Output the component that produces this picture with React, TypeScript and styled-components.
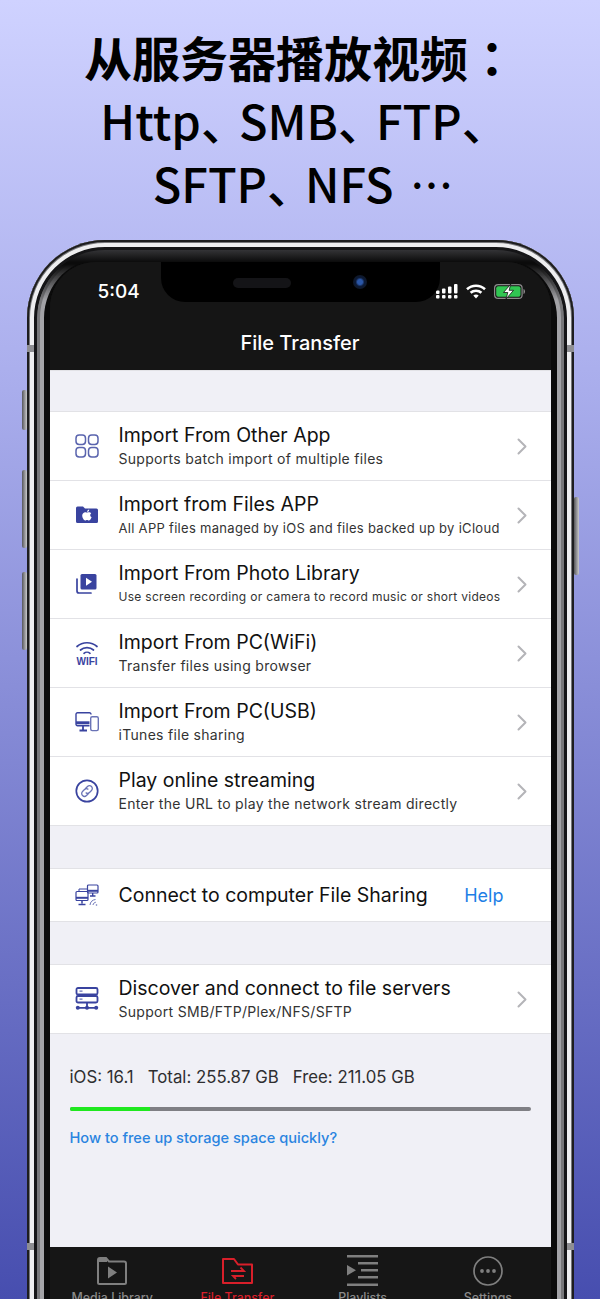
import React from 'react';
import styled, { createGlobalStyle } from 'styled-components';

const INDIGO = '#39439f';
const GREY = '#7f7f7f';
const RED = '#d81f2a';

const GlobalStyle = createGlobalStyle`
  html, body {
    margin: 0;
    padding: 0;
    height: 1299px;
    overflow: hidden;
  }
  * { box-sizing: border-box; }
`;

const Page = styled.div`
  width: 600px;
  height: 1299px;
  overflow: hidden;
  display: flex;
  flex-direction: column;
  align-items: center;
  background: linear-gradient(180deg, #cfd2ff 0%, #a9adec 30%, #474eaf 100%);
  font-family: Inter, "Liberation Sans", sans-serif;
`;

const Headline = styled.h1`
  flex: none;
  margin: 0;
  padding-top: 25px;
  height: 240px;
  width: 100%;
  text-align: center;
  font-family: "Noto Sans CJK JP", "Noto Sans CJK SC", sans-serif;
  font-weight: 500;
  font-size: 47px;
  line-height: 63px;
  color: #000;
`;

const HeadlineStrong = styled.span`
  display: block;
  font-size: 48px;
  font-weight: 700;
`;

const HeadlineLine = styled.span`
  display: block;
`;

const Pause = styled.span`
  letter-spacing: -9px;
`;

const Dots = styled.span`
  letter-spacing: -12px;
  font-weight: 400;
`;

const Phone = styled.div`
  position: relative;
  flex: none;
  width: 547px;
  height: 1180px;
  padding: 22px 23px 0;
  border-radius: 78px;
  background: linear-gradient(180deg, #3a3a3d 8px, #0b0b0b 22px);
  box-shadow:
    inset 0 0 0 2px #1d1d1f,
    inset 0 0 0 3px #77777a,
    inset 0 0 0 7px #eeeef0,
    inset 0 0 0 10px #151517;

  /* the grey inner rim fades out toward the top corners */
  &::before {
    content: '';
    position: absolute;
    inset: 10px;
    border-radius: 68px;
    box-shadow:
      inset 0 0 0 3px #77777a,
      inset 0 0 0 7px #a2a2a6,
      inset 0 0 0 13px #0b0b0b;
    -webkit-mask-image: linear-gradient(180deg, transparent 14px, #000 50px);
    mask-image: linear-gradient(180deg, transparent 14px, #000 50px);
  }
`;

const SideButton = styled.span<{ $side: 'left' | 'right'; $top: number; $height: number }>`
  position: absolute;
  ${(p) => (p.$side === 'left' ? 'left: -5px;' : 'right: -5px;')}
  top: ${(p) => p.$top}px;
  width: 5px;
  height: ${(p) => p.$height}px;
  border-radius: 2px;
  background: linear-gradient(90deg, #56565a, #c9c9cc);
`;

const Band = styled.span<{ $side: 'left' | 'right'; $top: number }>`
  position: absolute;
  ${(p) => (p.$side === 'left' ? 'left: 0;' : 'right: 0;')}
  top: ${(p) => p.$top}px;
  width: 7px;
  height: 7px;
  background: #8e8e92;
`;

const Screen = styled.div`
  position: relative;
  height: 1160px;
  border-radius: 46px 46px 0 0;
  overflow: hidden;
  background: #161616;
`;

const Notch = styled.div`
  position: absolute;
  top: 0;
  left: 111px;
  width: 279px;
  height: 40px;
  border-radius: 0 0 24px 24px;
  background: #000;
  z-index: 1;
`;

const Speaker = styled.span`
  position: absolute;
  top: 16px;
  left: 72px;
  width: 58px;
  height: 10px;
  border-radius: 5px;
  background: #141417;
`;

const Camera = styled.span`
  position: absolute;
  top: 13px;
  left: 192px;
  width: 14px;
  height: 14px;
  border-radius: 50%;
  background: radial-gradient(circle, #2b57a8 0 25%, #0c1a36 45%, #121418 100%);
`;

const Header = styled.header`
  height: 108px;
  background: #151515;
  display: flex;
  flex-direction: column;
`;

const StatusBar = styled.div`
  height: 56px;
  padding: 3px 26px 0 48px;
  display: flex;
  align-items: center;
  justify-content: space-between;
`;

const Time = styled.span`
  color: #fff;
  font-size: 19px;
  font-weight: 500;
`;

const StatusIcons = styled.div`
  display: flex;
  align-items: center;
  gap: 8px;
`;

const NavTitle = styled.div`
  flex: 1;
  display: flex;
  align-items: center;
  justify-content: center;
  padding-bottom: 3px;
  color: #fff;
  font-size: 20px;
  font-weight: 500;
`;

const Content = styled.main`
  height: 877px;
  padding-top: 40px;
  background: #f0f0f6;
  border-top: 1px solid #e2e2e6;
`;

const Group = styled.section`
  margin-bottom: 42px;
  background: #fff;
  border-top: 1px solid #e2e2e6;
  &:last-of-type { margin-bottom: 0; }
`;

const Row = styled.div<{ $compact?: boolean }>`
  height: ${(p) => (p.$compact ? 53 : 69)}px;
  display: flex;
  align-items: center;
  border-bottom: 1px solid #e2e2e6;
`;

const IconSlot = styled.div`
  flex: none;
  width: 26px;
  height: 30px;
  margin: 0 19px 0 24px;
  display: flex;
  align-items: center;
  justify-content: center;
`;

const RowText = styled.div`
  flex: 1;
  min-width: 0;
  display: flex;
  flex-direction: column;
  gap: 2px;
`;

const RowTitle = styled.div`
  color: #111;
  font-size: 19.5px;
  line-height: 26px;
  white-space: nowrap;
`;

const RowSub = styled.div<{ $size?: number }>`
  margin-bottom: 2px;
  color: #333;
  font-size: ${(p) => p.$size ?? 14}px;
  letter-spacing: 0.3px;
  line-height: 18px;
  white-space: nowrap;
`;

const Chevron = styled.svg`
  flex: none;
  margin-right: 24px;
`;

const HelpLink = styled.span`
  margin-right: 47px;
  color: #1d7fe6;
  font-size: 18px;
`;

const Storage = styled.div`
  padding: 32px 20px 0;
`;

const StorageText = styled.div`
  color: #2e2e30;
  font-size: 16.8px;
  line-height: 22px;
  white-space: pre;
`;

const StorageBar = styled.div`
  height: 4px;
  margin-top: 19px;
  border-radius: 2px;
  background: #7f7f84;
  overflow: hidden;
`;

const StorageFill = styled.div`
  height: 100%;
  background: #1fe81f;
`;

const StorageLink = styled.div`
  margin-top: 17px;
  color: #2a84e0;
  font-size: 14.6px;
  font-weight: 500;
  line-height: 20px;
`;

const TabBar = styled.nav`
  height: 60px;
  padding-top: 8px;
  background: #161616;
  display: grid;
  grid-template-columns: repeat(4, 1fr);
`;

const Tab = styled.div<{ $active?: boolean }>`
  display: flex;
  flex-direction: column;
  align-items: center;
  color: ${(p) => (p.$active ? RED : '#8a8a8a')};
  font-size: 12.4px;
  font-weight: 500;
  line-height: 15px;
  white-space: nowrap;
`;

const TabIconSlot = styled.div`
  height: 31px;
  margin-bottom: 4px;
  display: flex;
  align-items: center;
  justify-content: center;
`;

const GridIcon = () => (
  <svg width="24" height="24" viewBox="0 0 24 24" fill="none" stroke="#5a64ae" strokeWidth="1.5">
    <rect x="1" y="1" width="9.5" height="9.5" rx="3.2" />
    <rect x="13.5" y="1" width="9.5" height="9.5" rx="3.2" />
    <rect x="1" y="13.5" width="9.5" height="9.5" rx="3.2" />
    <rect x="13.5" y="13.5" width="9.5" height="9.5" rx="3.2" />
  </svg>
);

const FolderAppleIcon = () => (
  <svg width="22" height="18" viewBox="0 0 22 18">
    <path fill={INDIGO} d="M0 2a1.500 1.500 0 0 1 1.500-1.500h5.500l2 2h11.500a1.500 1.500 0 0 1 1.500 1.500v11.500a1.500 1.500 0 0 1-1.500 1.500h-19a1.500 1.500 0 0 1-1.500-1.500z" />
    <path fill="#fff" d="M11.300 6.600c1.100-.6 2.900-.7 3.900.7-1.500 1-1.300 3.200.4 3.900-.5 1.400-1.600 3.300-2.800 3.300-.7 0-1-.5-1.800-.5s-1.100.5-1.800.5c-1.300 0-3-2.800-3-4.900 0-2.600 2.700-4.100 4.100-3zM11.200 6.100c-.1-1.200.8-2.400 2-2.500.1 1.300-.8 2.500-2 2.500z" />
  </svg>
);

const PlayStackIcon = () => (
  <svg width="21" height="20" viewBox="0 0 21 20">
    <path fill="none" stroke={INDIGO} strokeWidth="1.700" strokeLinecap="round" d="M1 5v12a2 2 0 0 0 2 2h12" />
    <rect x="4.500" y="0" width="16" height="15.500" rx="1.500" fill={INDIGO} />
    <path fill="#fff" d="M10 3.800l6 4-6 4z" />
  </svg>
);

const WifiIcon = () => (
  <svg width="24" height="26" viewBox="0 0 24 26" fill="none" stroke={INDIGO} strokeWidth="1.700" strokeLinecap="round">
    <path d="M2 6.500c5.500-5 14.500-5 20 0" />
    <path d="M5.500 10c3.500-3.200 9.500-3.200 13 0" />
    <path d="M9 13.300c1.600-1.400 4.400-1.400 6 0" />
    <text x="12" y="25" textAnchor="middle" fontFamily="Liberation Sans, sans-serif" fontSize="10" fontWeight="700" fill={INDIGO} stroke="none">WIFI</text>
  </svg>
);

const DevicesIcon = () => (
  <svg width="24" height="20" viewBox="0 0 24 20" fill="none" stroke={INDIGO} strokeWidth="1.400">
    <path d="M16 2.500v-.2a1.500 1.500 0 0 0-1.500-1.500h-12a1.500 1.500 0 0 0-1.500 1.500v10a1.500 1.500 0 0 0 1.500 1.500h12" />
    <path d="M1 10.800h13.500" strokeWidth="3" />
    <path d="M8 14v4M4.500 18.500h7.500" strokeWidth="1.800" />
    <rect x="15.700" y="4.800" width="7.600" height="13.800" rx="1.500" stroke="#6a73b6" />
  </svg>
);

const LinkCircleIcon = () => (
  <svg width="24" height="24" viewBox="0 0 24 24" fill="none" stroke={INDIGO} strokeLinecap="round">
    <circle cx="12" cy="12" r="10.700" strokeWidth="1.700" />
    <g stroke="#6a73b6" strokeWidth="1.300">
      <path d="M10.500 9.500l2-2a2.800 2.800 0 0 1 4 4l-2 2c-1 1-2.400 1.100-3.400.4" />
      <path d="M13.500 14.500l-2 2a2.800 2.800 0 0 1-4-4l2-2c1-1 2.400-1.100 3.400-.4" />
    </g>
  </svg>
);

const NetworkIcon = () => (
  <svg width="24" height="22" viewBox="0 0 24 22" fill="none" stroke={INDIGO} strokeWidth="1.200">
    <rect x="1" y="7.500" width="12" height="9" rx="1" />
    <path d="M1 13.800h12" strokeWidth="2" />
    <path d="M7 16.500v3M3.500 20.500h7" strokeWidth="1.500" />
    <rect x="12.500" y="1" width="10.500" height="8" rx="1" />
    <path d="M12.500 6.800h10.500" strokeWidth="2" />
    <path d="M17.700 9v2.500M15 12h5.500" strokeWidth="1.400" />
    <path d="M4 7.500v-2.500h8" strokeWidth="1" />
    <path d="M15 21c.2-3 2.500-5.200 5.500-5.500M18 21c.2-1.400 1.200-2.500 2.800-2.800" stroke="#6a73b6" strokeWidth="1" />
    <circle cx="21.500" cy="21" r=".8" fill="#6a73b6" stroke="none" />
  </svg>
);

const ServersIcon = () => (
  <svg width="24" height="24" viewBox="0 0 24 24" fill="none" stroke={INDIGO} strokeWidth="1.800">
    <rect x="1.500" y="1" width="21" height="6.500" rx="1.500" />
    <rect x="1.500" y="9" width="21" height="6.500" rx="1.500" />
    <path d="M4.500 4.200h3M4.500 12.200h3" stroke="#6a73b6" strokeWidth="1.200" />
    <path d="M12 15.500v5M4 20.800h16" />
    <circle cx="2.800" cy="20.800" r="2" fill={INDIGO} stroke="none" />
    <circle cx="12" cy="20.800" r="2" fill={INDIGO} stroke="none" />
    <circle cx="21.200" cy="20.800" r="2" fill={INDIGO} stroke="none" />
  </svg>
);

const RowChevron = () => (
  <Chevron width="10" height="17" viewBox="0 0 10 17" fill="none" stroke="#b4b4b8" strokeWidth="2" strokeLinecap="round" strokeLinejoin="round">
    <path d="M1.500 1.500l7 7-7 7" />
  </Chevron>
);

const SignalIcon = () => (
  <svg width="22" height="15" viewBox="0 0 22 15" fill="#fff">
    <rect x="0" y="6.500" width="3.500" height="3.500" rx="1" />
    <rect x="0" y="11" width="3.500" height="3.500" rx="1" />
    <rect x="6" y="4.500" width="3.500" height="5" rx="1" />
    <rect x="6" y="11" width="3.500" height="3.500" rx="1" />
    <rect x="12" y="2.500" width="3.500" height="7" rx="1" />
    <rect x="12" y="11" width="3.500" height="3.500" rx="1" />
    <rect x="18" y="0" width="3.500" height="9.500" rx="1" />
    <rect x="18" y="11" width="3.500" height="3.500" rx="1" />
  </svg>
);

const StatusWifiIcon = () => (
  <svg width="20" height="15" viewBox="0 0 20 15" fill="none" stroke="#fff" strokeWidth="2.600">
    <path d="M1 5.200c5-4.600 13-4.600 18 0" />
    <path d="M4.600 8.800c3-2.700 7.800-2.700 10.800 0" />
    <path d="M10 14.500l-2.700-3c1.500-1.300 3.900-1.300 5.400 0z" fill="#fff" stroke="none" />
  </svg>
);

const BatteryIcon = () => (
  <svg width="31" height="15" viewBox="0 0 31 15">
    <rect x=".6" y=".6" width="27.500" height="13.800" rx="3.500" fill="none" stroke="#8b8b8b" strokeWidth="1.200" />
    <rect x="2.200" y="2.200" width="24.300" height="10.600" rx="2" fill="#31c652" />
    <path d="M29.500 5v5c1-.3 1.500-1.300 1.500-2.500s-.5-2.200-1.500-2.500z" fill="#8b8b8b" />
    <path d="M16.800 0l-7.300 8.500h4.300l-1.800 6.500 7.500-8.700h-4.400z" fill="#fff" stroke="#151515" strokeWidth=".8" />
  </svg>
);

const MediaTabIcon = () => (
  <svg width="30" height="28" viewBox="0 0 30 28" fill="none" stroke={GREY} strokeWidth="2">
    <path d="M1 25.500v-22.500a2 2 0 0 1 2-2h6l3 3.500h15a2 2 0 0 1 2 2v19a1.500 1.500 0 0 1-1.500 1.500h-25a1.500 1.500 0 0 1-1.500-1.500z" />
    <path d="M1 2h9v3h-9z" fill={GREY} stroke="none" />
    <path d="M11 9.500l9 6-9 6z" fill={GREY} stroke="none" />
  </svg>
);

const TransferTabIcon = () => (
  <svg width="31" height="26" viewBox="0 0 31 26" fill="none" stroke={RED} strokeWidth="2">
    <path d="M1 25v-24h11l4 5.500h14v18.500z" strokeLinejoin="round" />
    <path d="M9 13h13l-3.500-3.500M22 18h-11l3 3" strokeWidth="1.800" />
  </svg>
);

const PlaylistTabIcon = () => (
  <svg width="31" height="31" viewBox="0 0 31 31" fill={GREY}>
    <rect x="0" y="0" width="31" height="2.500" />
    <rect x="11" y="7" width="20" height="2.500" />
    <rect x="14" y="14" width="17" height="2.500" />
    <rect x="11" y="21" width="20" height="2.500" />
    <rect x="0" y="28.500" width="31" height="2.500" />
    <path d="M0 10l9 5.200-9 5.200z" />
  </svg>
);

const SettingsTabIcon = () => (
  <svg width="30" height="30" viewBox="0 0 30 30" fill={GREY}>
    <circle cx="15" cy="15" r="14" fill="none" stroke={GREY} strokeWidth="1.700" />
    <circle cx="9" cy="15" r="1.900" />
    <circle cx="15" cy="15" r="1.900" />
    <circle cx="21" cy="15" r="1.900" />
  </svg>
);

const importRows = [
  { icon: <GridIcon />, title: 'Import From Other App', sub: 'Supports batch import of multiple files' },
  { icon: <FolderAppleIcon />, title: 'Import from Files APP', sub: 'All APP files managed by iOS and files backed up by iCloud', size: 13 },
  { icon: <PlayStackIcon />, title: 'Import From Photo Library', sub: 'Use screen recording or camera to record music or short videos', size: 12 },
  { icon: <WifiIcon />, title: 'Import From PC(WiFi)', sub: 'Transfer files using browser' },
  { icon: <DevicesIcon />, title: 'Import From PC(USB)', sub: 'iTunes file sharing' },
  { icon: <LinkCircleIcon />, title: 'Play online streaming', sub: 'Enter the URL to play the network stream directly' },
];

const tabs = [
  { icon: <MediaTabIcon />, label: 'Media Library' },
  { icon: <TransferTabIcon />, label: 'File Transfer', active: true },
  { icon: <PlaylistTabIcon />, label: 'Playlists' },
  { icon: <SettingsTabIcon />, label: 'Settings' },
];

const App: React.FC = () => (
  <Page>
    <GlobalStyle />
    <Headline>
      <HeadlineStrong>从服务器播放视频：</HeadlineStrong>
      <HeadlineLine>Http<Pause>、</Pause>SMB<Pause>、</Pause>FTP<Pause>、</Pause></HeadlineLine>
      <HeadlineLine>SFTP<Pause>、</Pause>NFS <Dots>···</Dots></HeadlineLine>
    </Headline>
    <Phone>
      <SideButton $side="left" $top={150} $height={40} />
      <SideButton $side="left" $top={230} $height={78} />
      <SideButton $side="left" $top={332} $height={78} />
      <SideButton $side="right" $top={257} $height={78} />
      <Band $side="left" $top={105} />
      <Band $side="right" $top={105} />
      <Band $side="left" $top={1003} />
      <Band $side="right" $top={1003} />
      <Screen>
        <Notch>
          <Speaker />
          <Camera />
        </Notch>
        <Header>
          <StatusBar>
            <Time>5:04</Time>
            <StatusIcons>
              <SignalIcon />
              <StatusWifiIcon />
              <BatteryIcon />
            </StatusIcons>
          </StatusBar>
          <NavTitle>File Transfer</NavTitle>
        </Header>
        <Content>
          <Group>
            {importRows.map((row) => (
              <Row key={row.title}>
                <IconSlot>{row.icon}</IconSlot>
                <RowText>
                  <RowTitle>{row.title}</RowTitle>
                  <RowSub $size={row.size}>{row.sub}</RowSub>
                </RowText>
                <RowChevron />
              </Row>
            ))}
          </Group>
          <Group>
            <Row $compact>
              <IconSlot><NetworkIcon /></IconSlot>
              <RowText>
                <RowTitle>Connect to computer File Sharing</RowTitle>
              </RowText>
              <HelpLink>Help</HelpLink>
            </Row>
          </Group>
          <Group>
            <Row>
              <IconSlot><ServersIcon /></IconSlot>
              <RowText>
                <RowTitle>Discover and connect to file servers</RowTitle>
                <RowSub>Support SMB/FTP/Plex/NFS/SFTP</RowSub>
              </RowText>
              <RowChevron />
            </Row>
          </Group>
          <Storage>
            <StorageText>{'iOS: 16.1   Total: 255.87 GB   Free: 211.05 GB'}</StorageText>
            <StorageBar>
              <StorageFill style={{ width: `${(1 - 211.05 / 255.87) * 100}%` }} />
            </StorageBar>
            <StorageLink>How to free up storage space quickly?</StorageLink>
          </Storage>
        </Content>
        <TabBar>
          {tabs.map((tab) => (
            <Tab key={tab.label} $active={tab.active}>
              <TabIconSlot>{tab.icon}</TabIconSlot>
              {tab.label}
            </Tab>
          ))}
        </TabBar>
      </Screen>
    </Phone>
  </Page>
);

export default App;
